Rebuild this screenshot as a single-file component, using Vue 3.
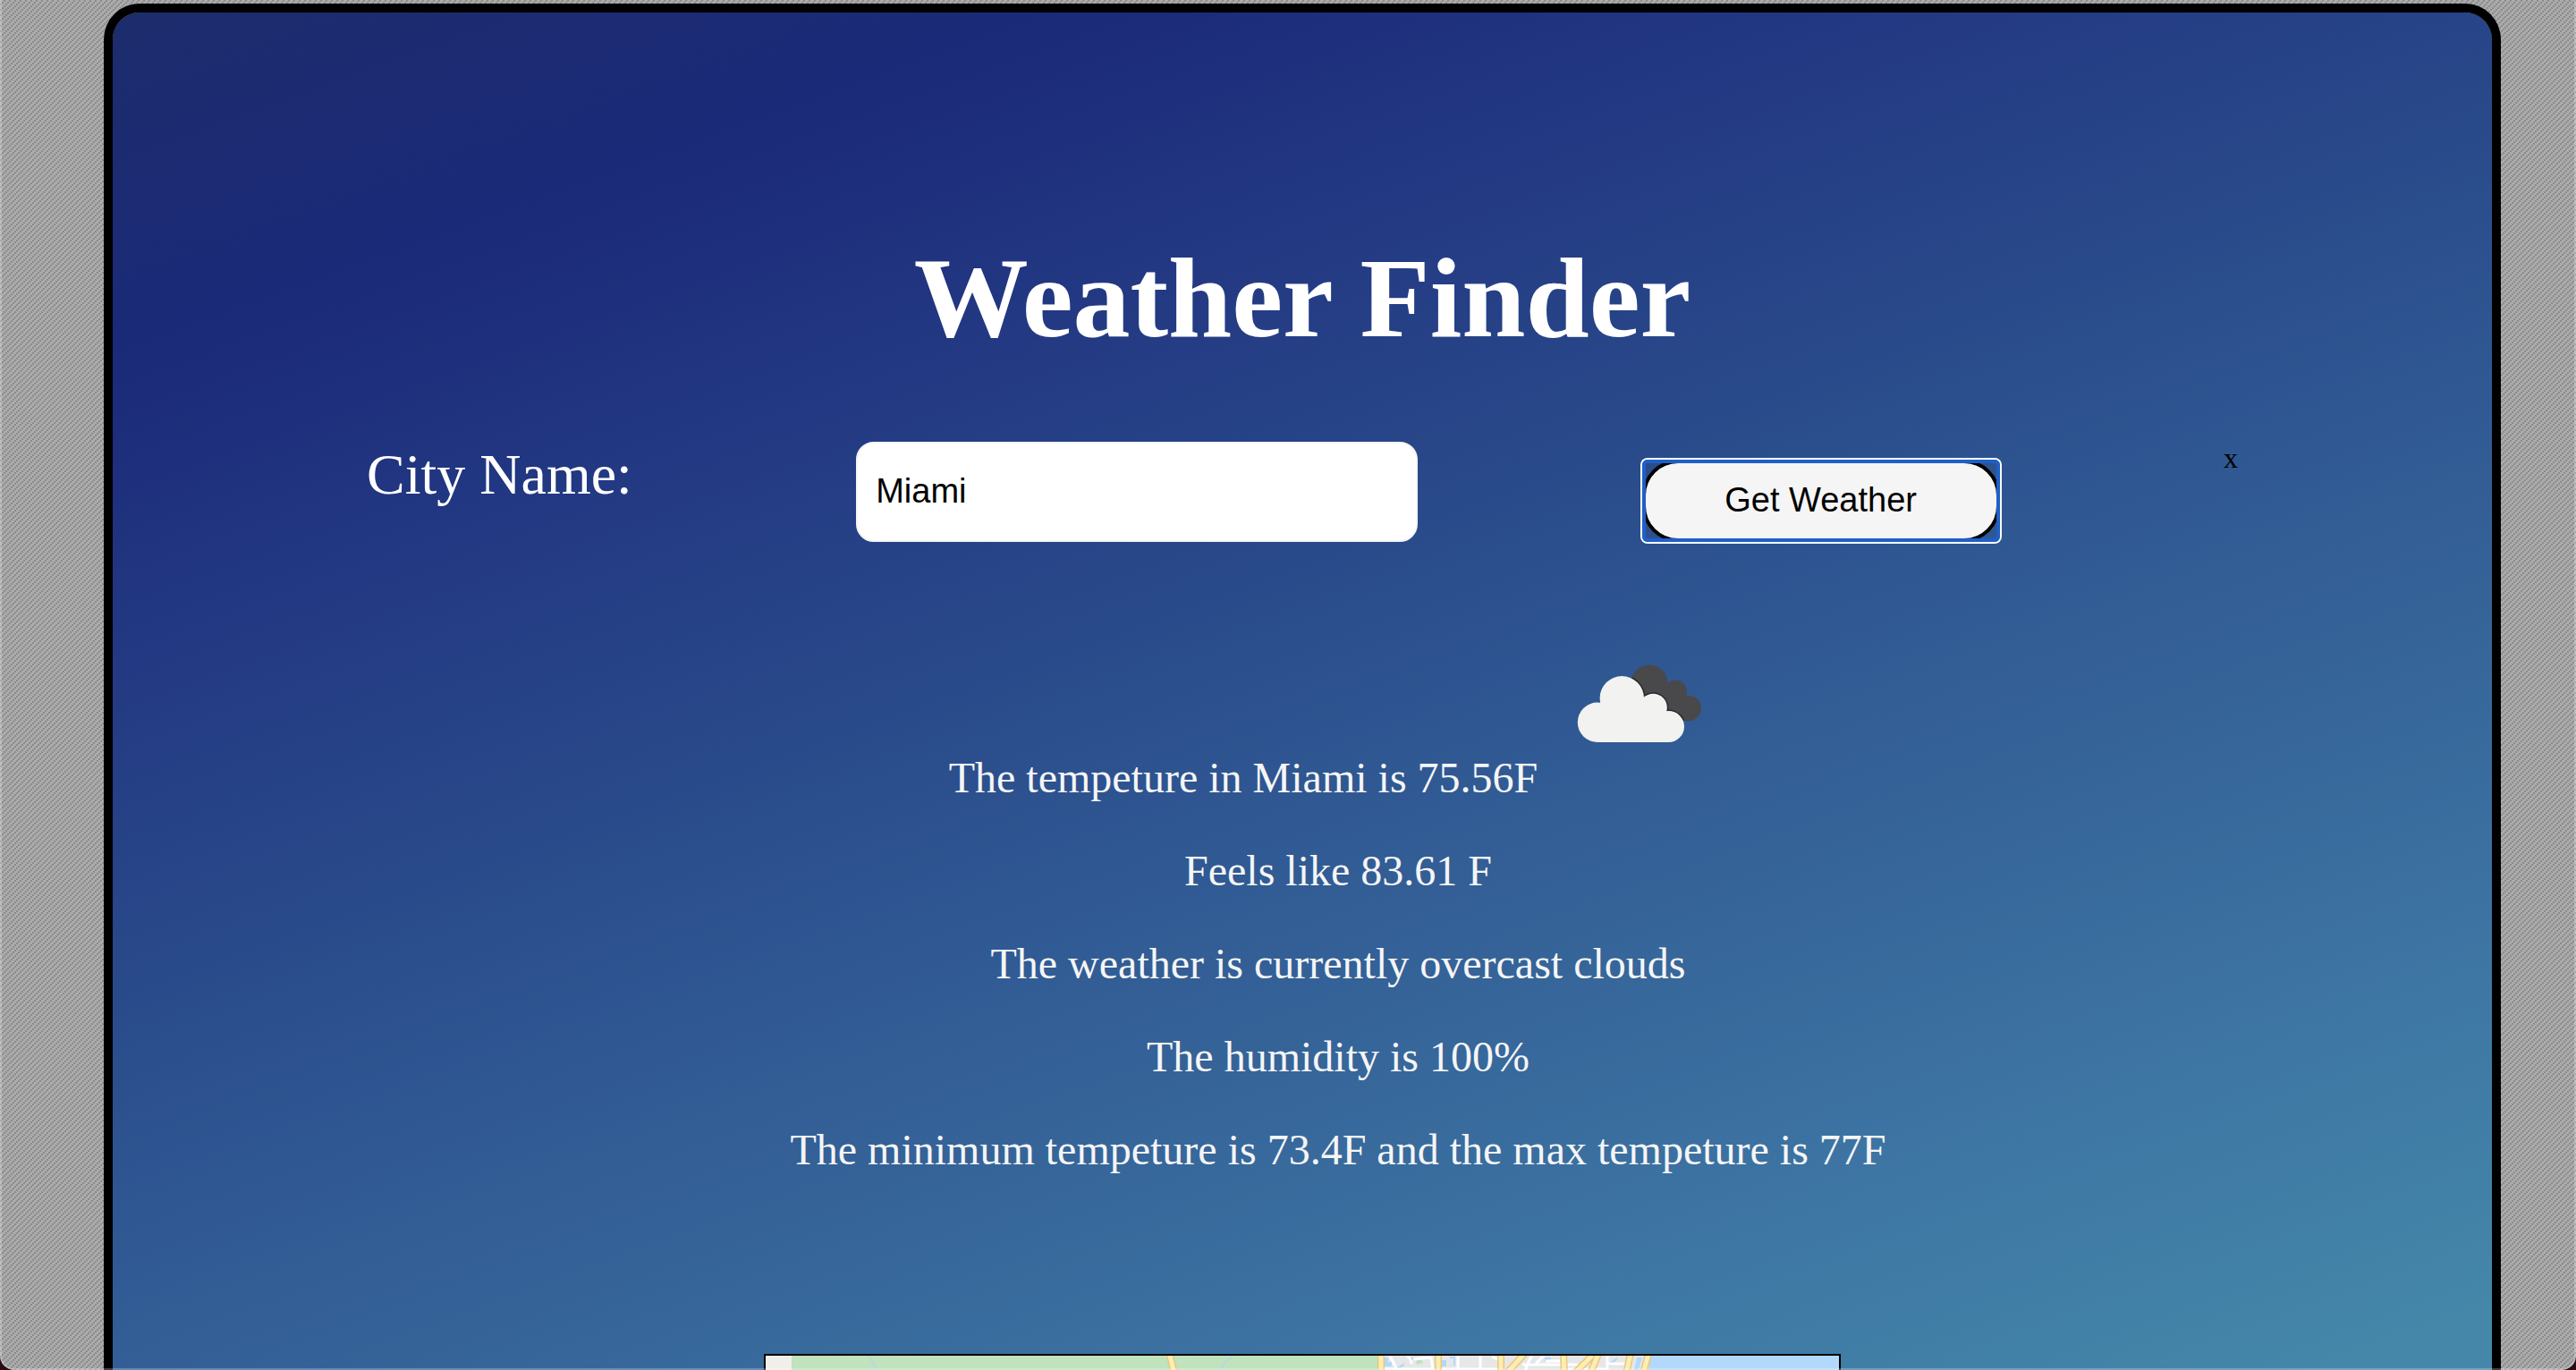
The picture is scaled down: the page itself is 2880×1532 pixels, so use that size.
<script setup>
import { ref } from 'vue'

const city = ref('Miami')
const details = [
  'Feels like 83.61 F',
  'The weather is currently overcast clouds',
  'The humidity is 100%',
  'The minimum tempeture is 73.4F and the max tempeture is 77F',
]
</script>

<template>
  <div class="backdrop">
    <div class="screen">
      <main class="panel">
        <h1>Weather Finder</h1>
        <form class="search" @submit.prevent>
          <label for="city">City Name:</label>
          <input id="city" v-model="city" type="text" />
          <button class="submit" type="submit">Get Weather</button>
          <span class="clear">x</span>
        </form>

        <ul class="report">
          <li>
            The tempeture in {{ city }} is 75.56F
            <svg class="icon" viewBox="0 0 200 200" role="img" aria-label="overcast clouds">
              <defs>
                <clipPath id="rear">
                  <circle cx="113" cy="78" r="20.5" />
                  <circle cx="142.3" cy="87.3" r="12.7" />
                  <circle cx="156.7" cy="106" r="14.3" />
                  <path d="M113 62L131 78L147 92L158 120L111 120Z" />
                </clipPath>
                <g id="front">
                  <circle cx="55" cy="121.8" r="22.2" />
                  <circle cx="82.3" cy="94.7" r="24.7" />
                  <circle cx="117.3" cy="105.3" r="15.5" />
                  <circle cx="134.5" cy="126.5" r="17.5" />
                  <path d="M55 144V110L82 95L117 100L135 120V144Z" />
                </g>
              </defs>
              <g clip-path="url(#rear)">
                <rect width="200" height="200" fill="#49494b" />
                <use href="#front" fill="#222" stroke="#29292b" stroke-width="3" />
              </g>
              <use href="#front" fill="#f2f2f0" />
            </svg>
          </li>
          <li v-for="line in details" :key="line">{{ line }}</li>
        </ul>

        <div class="map">
          <svg viewBox="0 0 1200 400" preserveAspectRatio="xMinYMin slice" aria-hidden="true">
            <rect width="1200" height="400" fill="#c0e2bd" />
            <rect width="29" height="400" fill="#f2eeea" />
            <rect x="685" width="304" height="400" fill="#e7e7e7" />
            <path d="M989 0H1200V400H940Z" fill="#b2d9fb" />
            <g fill="none" stroke="#b4dcd4" stroke-width="2">
              <path d="M114 0Q122 8 126 20" />
              <path d="M522 0Q512 8 507 18" />
            </g>
            <g fill="#b2d9fb">
              <path d="M692 2h4v5h4v5h-8z" />
              <path d="M720 2h8v3h-8zM706 13l8-5v3l-6 4z" />
              <path d="M756 5h5v7h-5zM765 1h6v10h-2V3h-4z" />
              <path d="M871 2h7v5h-7zM856 8h5v3h-5z" />
              <path d="M942 9l10-7v2l-8 8zM974 2h6l-4 14h-5z" />
            </g>
            <path d="M727 6l6-2 2 4-7 2z" fill="#c0e2bd" />
            <g fill="none" stroke="#fff" stroke-width="3">
              <path d="M698 0L706 16M717 0Q722 4 722 9M724 4L744 2L746 16M692 15H818M774 0V16M799 0V16M812 1L818 4" />
              <path d="M857 0Q851 8 850 16M846 10H908M870 0L861 9M872 6H888M941 0V16M941 9H962M896 15H940" />
            </g>
            <g fill="none" stroke="#e9c878" stroke-width="8">
              <path d="M452 0L457 20M688 0V20M752 0V20M822 0V20M850 -4L828 20M892 -2L893 20M924 0L904 20M931 -2L922 20M967 -2L962 20M987 -2L981 20" />
            </g>
            <g fill="none" stroke="#fdedb2" stroke-width="5">
              <path d="M452 0L457 20M688 0V20M752 0V20M822 0V20M850 -4L828 20M892 -2L893 20M924 0L904 20M931 -2L922 20M967 -2L962 20M987 -2L981 20" />
            </g>
          </svg>
        </div>
      </main>
    </div>
  </div>
</template>

<style>
body {
  margin: 0;
}
</style>

<style scoped>
.backdrop {
  height: 100vh;
  background: #2c0c10;
}

.screen {
  position: relative;
  box-sizing: border-box;
  height: 100%;
  overflow: hidden;
  padding: 4px 84px 0 116px;
  border-radius: 0 0 16px 16px;
  background-color: #ababab;
  background-image: url("data:image/svg+xml,%3Csvg xmlns='http://www.w3.org/2000/svg' width='6' height='6' shape-rendering='crispEdges'%3E%3Cpath d='M4 0h2v2H4zM2 2h2v2H2zM0 4h2v2H0z' fill='%238c8c8c'/%3E%3C/svg%3E");
  font-family: "Liberation Serif", "Times New Roman", serif;
}

/* Light window edge over the page */
.screen::after {
  content: "";
  position: absolute;
  inset: 0;
  border: 2px solid rgba(255, 255, 255, 0.25);
  border-top: 0;
  border-radius: 0 0 16px 16px;
  pointer-events: none;
}

.panel {
  display: flex;
  flex-direction: column;
  box-sizing: border-box;
  height: 100vh;
  padding-top: 246px;
  border: 10px solid #000;
  border-bottom: 0;
  border-radius: 40px 40px 0 0;
  background: linear-gradient(
    160deg,
    #1d2c6c 0%,
    #1b2a79 16%,
    #243b84 31%,
    #294a8a 44%,
    #2f5792 54%,
    #356398 65%,
    #3d74a3 80%,
    #4487a9 97%
  ) padding-box;
}

h1 {
  margin: 0;
  color: #fff;
  font-size: 128px;
  line-height: 146px;
  text-align: center;
}

.search {
  display: flex;
  align-items: flex-start;
  justify-content: space-between;
  margin-top: 88px;
  padding: 0 284px;
}

.search label {
  color: #fff;
  font-size: 64px;
  line-height: 74px;
}

.search input,
.submit {
  box-sizing: border-box;
  margin: 0;
  color: #000;
  font-family: "Liberation Sans", Arial, sans-serif;
  font-size: 38px;
}

.search input {
  width: 628px;
  height: 112px;
  padding: 0 20px 2px;
  border: 2px solid #f5f5f5;
  border-radius: 20px;
  background: #fff;
}

.submit {
  position: relative;
  width: 400px;
  height: 92px;
  margin-top: 20px;
  padding: 0 0 2px;
  border: 4px solid #000;
  border-radius: 40px;
  background: #f5f5f5;
}

/* Focus ring */
.submit::after {
  content: "";
  position: absolute;
  inset: -4px;
  border: 4px solid #1f5fc8;
  border-radius: 6px;
  box-shadow: 0 0 0 2px #fff;
}

.clear {
  font-size: 32px;
  line-height: 36px;
}

.report {
  display: flex;
  flex-direction: column;
  gap: 48px;
  margin: 80px 0 0;
  padding: 0 0 0 80px;
  color: #f5f5f5;
  font-size: 48px;
  line-height: 56px;
  list-style: none;
  text-align: center;
}

.icon {
  width: 200px;
  height: 200px;
  vertical-align: baseline;
}

.map {
  flex: none;
  align-self: center;
  width: 1200px;
  height: 400px;
  margin-top: 200px;
  border: 2px solid #000;
}

.map svg {
  display: block;
  width: 100%;
  height: 100%;
}
</style>
